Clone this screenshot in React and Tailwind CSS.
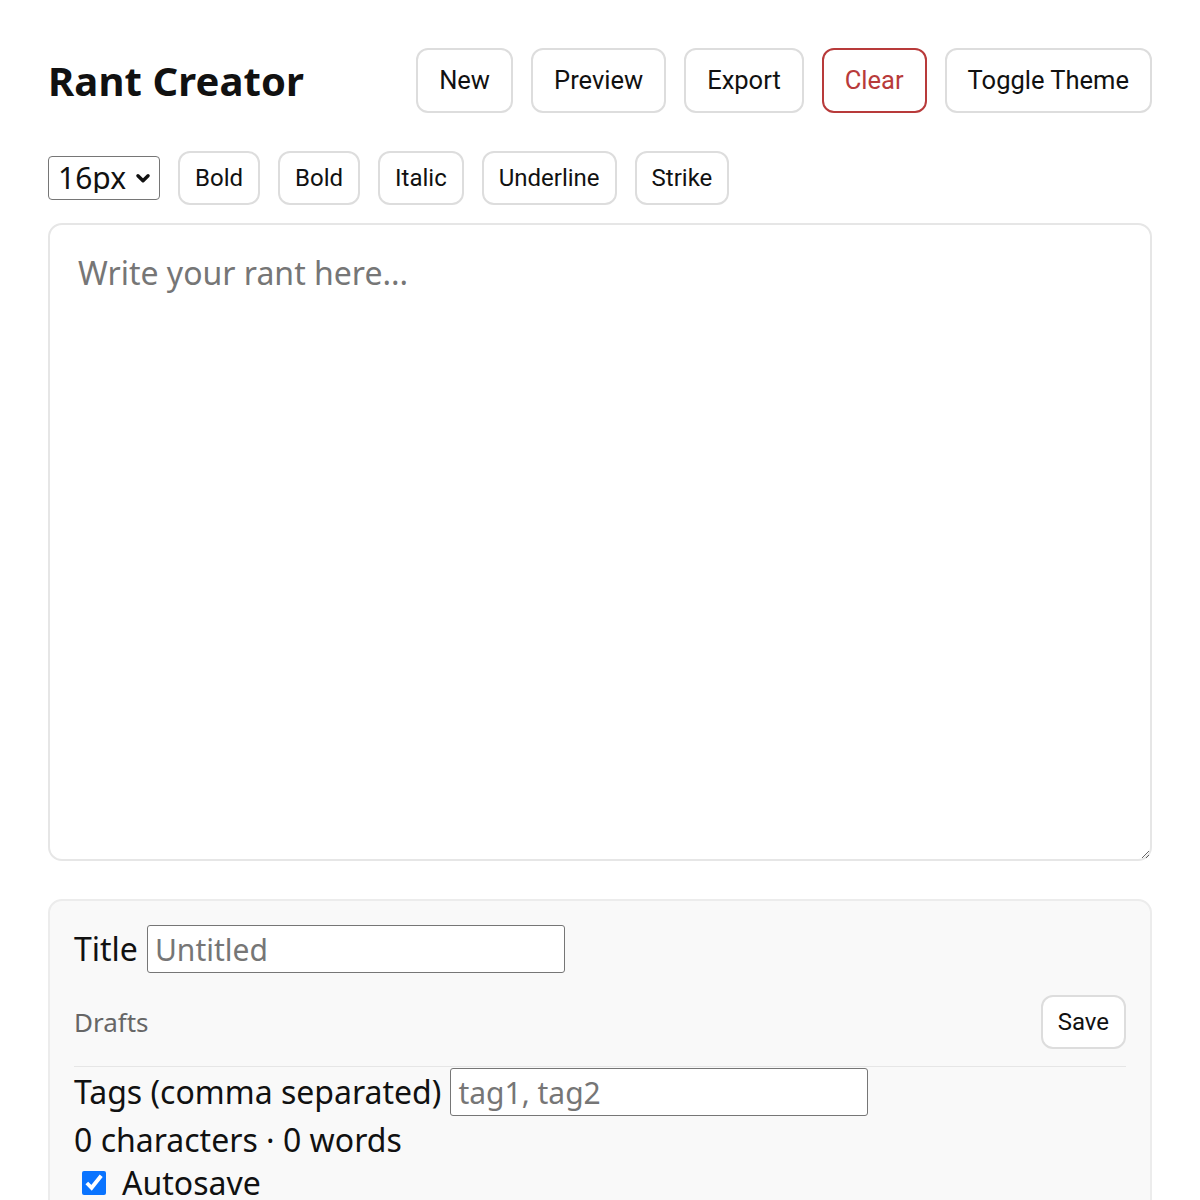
import React, { useState } from "react";

const sans = "font-['Noto_Sans','Open_Sans',sans-serif]";
const btnFont = "font-['Roboto','Liberation_Sans',sans-serif]";

function HeaderButton({ children, danger }) {
  return (
    <button
      type="button"
      className={`${btnFont} h-[65px] px-[21px] rounded-xl border-2 bg-white text-[25.5px] leading-none ${
        danger ? "border-[#b83a3a] text-[#b83a3a]" : "border-[#dddddd] text-[#111111]"
      }`}
    >
      {children}
    </button>
  );
}

function ToolButton({ children }) {
  return (
    <button
      type="button"
      className={`${btnFont} h-[54px] px-[15px] rounded-xl border-2 border-[#dddddd] bg-white text-[24px] leading-none text-[#111111]`}
    >
      {children}
    </button>
  );
}

function FontSizeSelect() {
  return (
    <div className="relative h-11 w-[112px]">
      <select
        defaultValue="16px"
        className={`${sans} h-full w-full appearance-none rounded-[4px] border-[1.5px] border-[#767676] bg-white pl-[9px] text-[30px] leading-none text-[#111111] outline-none`}
      >
        <option>12px</option>
        <option>14px</option>
        <option>16px</option>
        <option>18px</option>
        <option>20px</option>
      </select>
      <svg
        viewBox="0 0 16 16"
        className="pointer-events-none absolute right-[8px] top-1/2 h-[18px] w-[18px] -translate-y-1/2"
        fill="none"
        stroke="#111111"
        strokeWidth="3"
        strokeLinecap="round"
        strokeLinejoin="round"
      >
        <path d="M3.5 6l4.5 4.5L12.5 6" />
      </svg>
    </div>
  );
}

export default function App() {
  const [text, setText] = useState("");
  const [autosave, setAutosave] = useState(true);
  const chars = text.length;
  const words = text.trim() ? text.trim().split(/\s+/).length : 0;

  return (
    <div className={`${sans} min-h-screen bg-white px-12 pt-12 text-[#111111]`}>
      {/* top bar */}
      <header className="flex items-center justify-between">
        <h1 className="text-[40px] font-bold leading-none tracking-[0.1px]">Rant Creator</h1>
        <div className="flex gap-[18px]">
          <HeaderButton>New</HeaderButton>
          <HeaderButton>Preview</HeaderButton>
          <HeaderButton>Export</HeaderButton>
          <HeaderButton danger>Clear</HeaderButton>
          <HeaderButton>Toggle Theme</HeaderButton>
        </div>
      </header>

      {/* formatting toolbar */}
      <div className="mt-[38px] flex items-center gap-[18px]">
        <FontSizeSelect />
        <ToolButton>Bold</ToolButton>
        <ToolButton>Bold</ToolButton>
        <ToolButton>Italic</ToolButton>
        <ToolButton>Underline</ToolButton>
        <ToolButton>Strike</ToolButton>
      </div>

      {/* editor */}
      <textarea
        value={text}
        onChange={(e) => setText(e.target.value)}
        placeholder="Write your rant here..."
        className={`${sans} mt-[18px] block h-[638px] w-full resize-y rounded-[14px] border-2 border-[#e6e6e6] bg-white px-[28px] pt-[24px] text-[32px] leading-[1.5] text-[#111111] placeholder:text-[#767676] outline-none`}
      />

      {/* metadata panel */}
      <section className="mt-[38px] rounded-[14px] border-2 border-[#ececec] bg-[#f9f9f9] px-6 pt-6 pb-4">
        <div className="flex items-center gap-[9px]">
          <label className="text-[32px] leading-none">Title</label>
          <input
            placeholder="Untitled"
            className={`${sans} h-12 w-[418px] rounded-[3px] border-[1.5px] border-[#767676] bg-white px-[7px] text-[30px] leading-none placeholder:text-[#767676] outline-none`}
          />
        </div>

        <div className="mt-[22px] flex items-center justify-between border-b border-[#e6e6e6] pb-[17px]">
          <span className="text-[26px] leading-none text-[#666666]">Drafts</span>
          <ToolButton>Save</ToolButton>
        </div>

        <div className="mt-[1px] flex items-center gap-[9px]">
          <label className="text-[32px] leading-none">Tags (comma separated)</label>
          <input
            placeholder="tag1, tag2"
            className={`${sans} h-12 w-[418px] rounded-[3px] border-[1.5px] border-[#767676] bg-white px-[7px] text-[30px] leading-none placeholder:text-[#767676] outline-none`}
          />
        </div>

        <div className="text-[32px] leading-[48px]">
          {chars} characters · {words} words
        </div>

        <label className="flex items-center gap-4 text-[32px] leading-[38px]">
          <input
            type="checkbox"
            checked={autosave}
            onChange={(e) => setAutosave(e.target.checked)}
            className="ml-2 h-6 w-6 accent-[#0a74ff]"
          />
          Autosave
        </label>
      </section>
    </div>
  );
}
